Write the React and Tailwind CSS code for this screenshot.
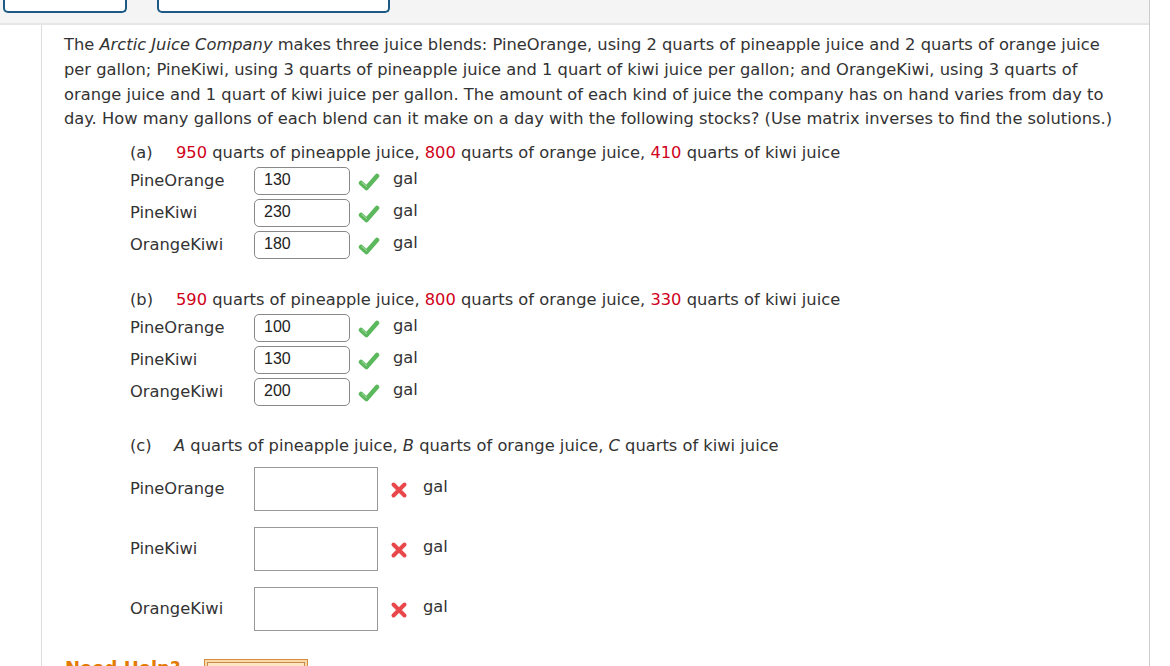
import React from 'react';

const font = { fontFamily: '"DejaVu Sans", Verdana, sans-serif' };

const Check = () => (
  <svg width="22" height="18" viewBox="0 0 22 18" className="shrink-0">
    <path d="M3 10 L8.5 15 L19 3" fill="none" stroke="#5cb85c" strokeWidth="4.5" strokeLinecap="round" strokeLinejoin="round" />
    <path d="M4 9.5 L8.5 13.5" fill="none" stroke="#8fd18f" strokeWidth="1.2" strokeLinecap="round" />
  </svg>
);

const Cross = () => (
  <svg width="18" height="18" viewBox="0 0 18 18" className="shrink-0">
    <path d="M3.5 3.5 L14.5 14.5 M14.5 3.5 L3.5 14.5" fill="none" stroke="#e8474c" strokeWidth="4" strokeLinecap="round" />
  </svg>
);

const Red = ({ children }) => <span className="text-[#d0021b]">{children}</span>;

const SmallRow = ({ label, value }) => (
  <div className="flex items-center h-[32px]">
    <div className="w-[124px]">{label}</div>
    <div className="w-[96px] h-[28px] border border-[#888] rounded-[5px] px-[9px] flex items-center text-[16px] text-[#222]" style={{ fontFamily: '"Liberation Sans", Arial, sans-serif' }}>
      <span className="-mt-[3px]">{value}</span>
    </div>
    <div className="ml-[8px] mt-[2px]"><Check /></div>
    <div className="ml-[13px] -mt-[4px]">gal</div>
  </div>
);

const BigRow = ({ label }) => (
  <div className="flex items-center h-[60px]">
    <div className="w-[124px]">{label}</div>
    <div className="w-[124px] h-[44px] border border-[#999] bg-white" />
    <div className="ml-[12px] mt-[2px]"><Cross /></div>
    <div className="ml-[15px] -mt-[4px]">gal</div>
  </div>
);

export default function App() {
  return (
    <div className="w-[1170px] h-[666px] overflow-hidden bg-white text-[16.3px] text-[#333]" style={font}>
      <div className="w-[1150px] border-r border-[#ccc]">
        <div className="h-[25px] bg-[#f4f4f4] border-b-2 border-[#e6e6e6] flex gap-[30px] pl-[3px]">
          <div className="w-[124px] h-[13px] border-2 border-t-0 border-[#1c5a85] rounded-b-[5px] bg-white" />
          <div className="w-[233px] h-[13px] border-2 border-t-0 border-[#1c5a85] rounded-b-[5px] bg-white" />
        </div>
        <div className="ml-[41px] border-l border-[#ddd] pl-[22px] pr-[30px] pt-[8px] h-[641px]">
          <p className="leading-[24.8px]">
            The <i>Arctic Juice Company</i> makes three juice blends: PineOrange, using 2 quarts of pineapple juice and 2 quarts of orange juice per gallon; PineKiwi, using 3 quarts of pineapple juice and 1 quart of kiwi juice per gallon; and OrangeKiwi, using 3 quarts of orange juice and 1 quart of kiwi juice per gallon. The amount of each kind of juice the company has on hand varies from day to day. How many gallons of each blend can it make on a day with the following stocks? (Use matrix inverses to find the solutions.)
          </p>
          <div className="pl-[66px]">
            <div className="mt-[12px] flex h-[18px] items-center">
              <span className="w-[46px]">(a)</span>
              <span><Red>950</Red> quarts of pineapple juice, <Red>800</Red> quarts of orange juice, <Red>410</Red> quarts of kiwi juice</span>
            </div>
            <div className="mt-[3px]">
              <SmallRow label="PineOrange" value="130" />
              <SmallRow label="PineKiwi" value="230" />
              <SmallRow label="OrangeKiwi" value="180" />
            </div>

            <div className="mt-[30px] flex h-[18px] items-center">
              <span className="w-[46px]">(b)</span>
              <span><Red>590</Red> quarts of pineapple juice, <Red>800</Red> quarts of orange juice, <Red>330</Red> quarts of kiwi juice</span>
            </div>
            <div className="mt-[3px]">
              <SmallRow label="PineOrange" value="100" />
              <SmallRow label="PineKiwi" value="130" />
              <SmallRow label="OrangeKiwi" value="200" />
            </div>

            <div className="mt-[29px] flex h-[18px] items-center">
              <span className="w-[44px]">(c)</span>
              <span><i>A</i> quarts of pineapple juice, <i>B</i> quarts of orange juice, <i>C</i> quarts of kiwi juice</span>
            </div>
            <div className="mt-[4px]">
              <BigRow label="PineOrange" />
              <BigRow label="PineKiwi" />
              <BigRow label="OrangeKiwi" />
            </div>

            <div className="mt-[20px] flex items-start -ml-[65px]">
              <span className="text-[#e37b00] font-bold text-[18px] w-[139px] leading-[18px]">Need Help?</span>
              <div className="w-[104px] h-[24px] border border-[#d58a3c] bg-[#fbd9a8] p-[2px]">
                <div className="w-full h-full border border-[#c98a4a] bg-[#fde6c4]" />
              </div>
            </div>
          </div>
        </div>
      </div>
    </div>
  );
}
